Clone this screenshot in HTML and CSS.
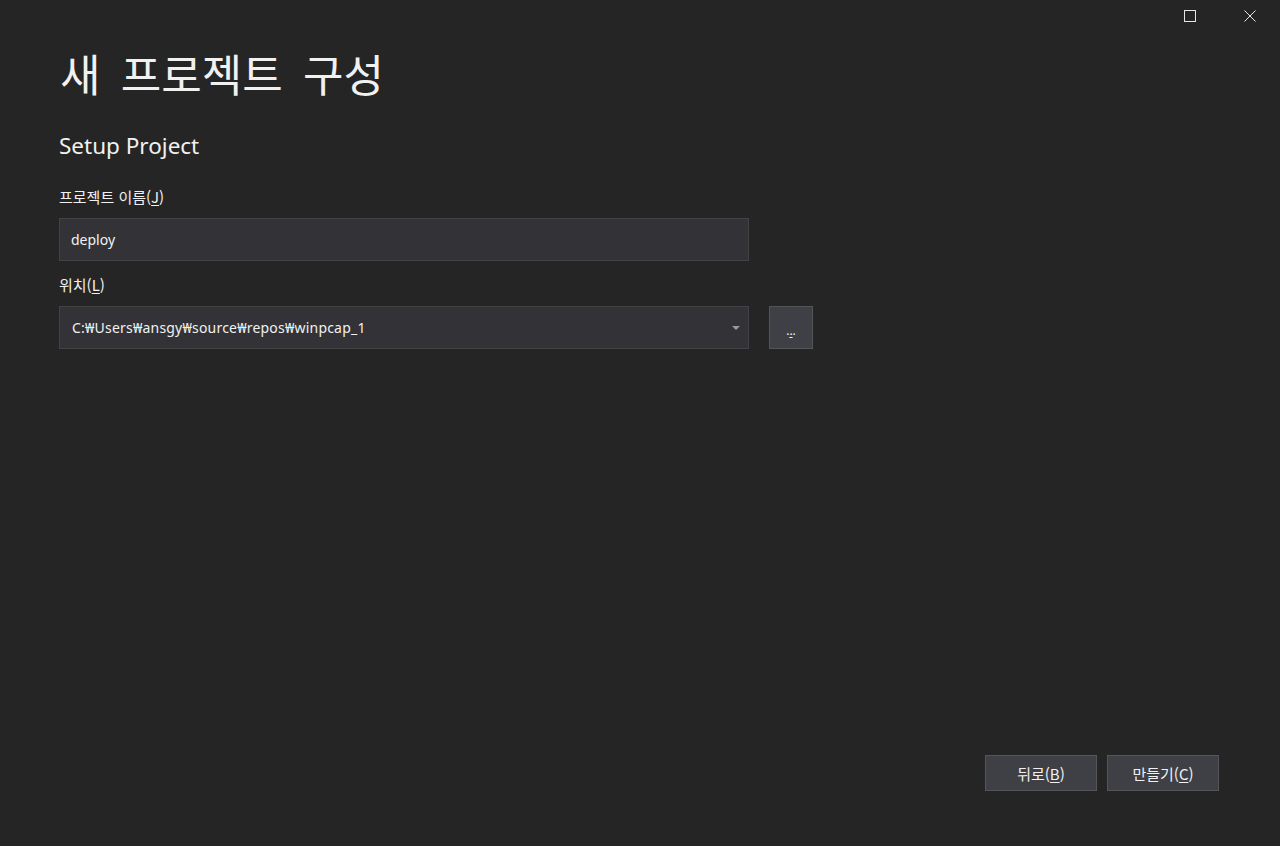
FILE: index.html
```html
<!DOCTYPE html>
<html lang="ko">
<head>
<meta charset="utf-8">
<title>새 프로젝트 구성</title>
<link rel="stylesheet" href="styles.css">
</head>
<body>
<div class="window">
  <div class="titlebar">
    <button class="tb-btn" aria-label="최대화">
      <svg width="12" height="12" viewBox="0 0 12 12"><rect x="0.5" y="0.5" width="11" height="11" fill="none" stroke="#e6e6e6" stroke-width="1"/></svg>
    </button>
    <button class="tb-btn" aria-label="닫기">
      <svg width="12" height="12" viewBox="0 0 12 12"><path d="M0.5 0.5 L11.5 11.5 M11.5 0.5 L0.5 11.5" stroke="#e6e6e6" stroke-width="1"/></svg>
    </button>
  </div>
  <main class="content">
    <h1 class="title">새 프로젝트 구성</h1>
    <h2 class="subtitle">Setup Project</h2>
    <label class="label">프로젝트 이름(<u>J</u>)</label>
    <div class="field name-field">deploy</div>
    <label class="label loc-label">위치(<u>L</u>)</label>
    <div class="loc-row">
      <div class="field combo">
        <span>C:₩Users₩ansgy₩source₩repos₩winpcap_1</span>
        <span class="arrow"></span>
      </div>
      <button class="browse"><span>.<u>.</u>.</span></button>
    </div>
  </main>
  <footer class="footer">
    <button class="btn">뒤로(<u>B</u>)</button>
    <button class="btn">만들기(<u>C</u>)</button>
  </footer>
</div>
</body>
</html>
```
FILE: styles.css
```css
html, body {
  margin: 0;
  padding: 0;
  height: 100%;
  background: #252526;
}
body {
  font-family: "Noto Sans", "Noto Sans CJK KR", sans-serif;
  color: #f1f1f1;
}
.window {
  height: 846px;
  display: flex;
  flex-direction: column;
}
.titlebar {
  height: 31px;
  display: flex;
  justify-content: flex-end;
}
.tb-btn {
  width: 60px;
  height: 31px;
  background: transparent;
  border: 0;
  padding: 0;
  display: flex;
  align-items: center;
  justify-content: center;
}
.tb-btn svg { display: block; }
.content {
  flex: 1;
  padding-left: 59px;
  display: flex;
  flex-direction: column;
  align-items: flex-start;
}
.title {
  font-family: "Noto Sans CJK KR", sans-serif;
  font-weight: 400;
  font-size: 44px;
  line-height: 60px;
  margin: 12px 0 0 1px;
  word-spacing: 8px;
  color: #f1f1f1;
}
.subtitle {
  font-weight: 400;
  font-size: 22.5px;
  line-height: 30px;
  margin: 28px 0 0 0;
  color: #f1f1f1;
}
.label {
  font-family: "Noto Sans CJK KR", sans-serif;
  font-size: 15px;
  line-height: 20px;
  margin-top: 26px;
  color: #f1f1f1;
}
.loc-label { margin-top: 14px; }
.field {
  box-sizing: border-box;
  width: 690px;
  height: 43px;
  background: #333337;
  border: 1px solid #434346;
  font-size: 14px;
  color: #f1f1f1;
  display: flex;
  align-items: center;
  padding-left: 11px;
}
.name-field { margin-top: 11px; }
.loc-row {
  display: flex;
  gap: 20px;
  margin-top: 11px;
}
.combo {
  justify-content: space-between;
  padding-right: 8px;
  padding-left: 12px;
  letter-spacing: 0.2px;
}
.arrow {
  width: 0;
  height: 0;
  border-left: 4px solid transparent;
  border-right: 4px solid transparent;
  border-top: 4px solid #999999;
}
.browse {
  box-sizing: border-box;
  width: 44px;
  height: 43px;
  background: #3f3f46;
  border: 1px solid #555558;
  color: #f1f1f1;
  font-family: "Noto Sans", sans-serif;
  font-size: 12px;
  padding: 0;
  display: flex;
  align-items: flex-end;
  justify-content: center;
  padding-bottom: 9px;
}
.footer {
  display: flex;
  justify-content: flex-end;
  gap: 10px;
  padding-right: 61px;
  padding-bottom: 55px;
}
.btn {
  box-sizing: border-box;
  width: 112px;
  height: 36px;
  background: #3f3f46;
  border: 1px solid #555558;
  color: #f1f1f1;
  font-family: "Noto Sans CJK KR", sans-serif;
  font-size: 15px;
  padding: 0;
}
u { text-underline-offset: 2px; }
```
